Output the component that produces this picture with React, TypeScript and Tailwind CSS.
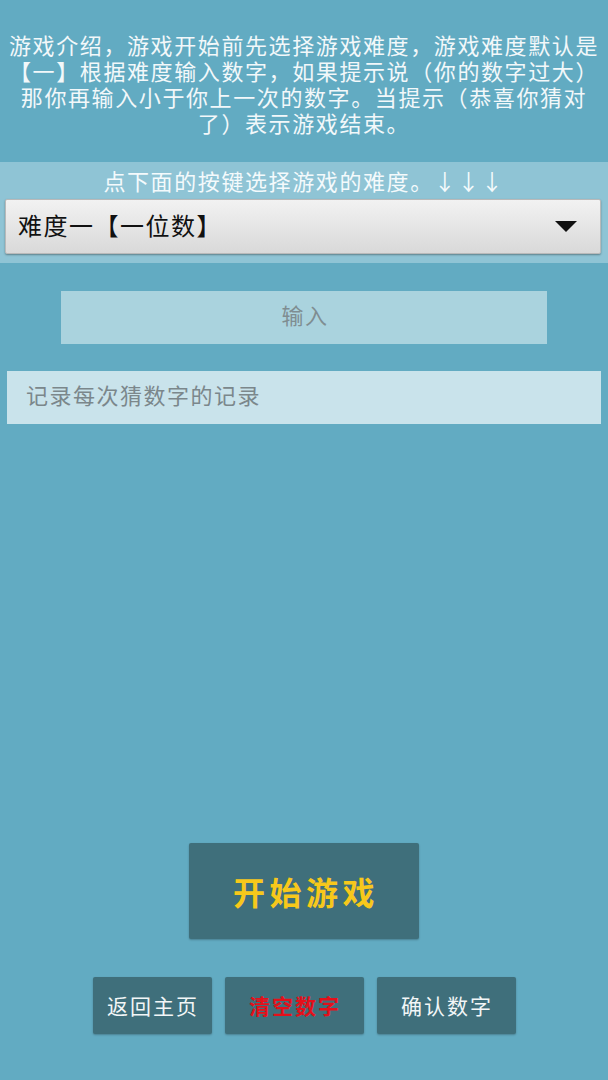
const cjk = { fontFamily: '"Noto Sans CJK SC", "Noto Sans", sans-serif' };

const introLines = [
  "游戏介绍，游戏开始前先选择游戏难度，游戏难度默认是",
  "【一】根据难度输入数字，如果提示说（你的数字过大）",
  "那你再输入小于你上一次的数字。当提示（恭喜你猜对",
  "了）表示游戏结束。",
];

function ActionButton({
  label,
  className,
  textClass,
}: {
  label: string;
  className: string;
  textClass: string;
}) {
  return (
    <button
      className={`bg-[#3f6f7b] rounded-[2px] shadow-[0_1px_2px_rgba(0,0,0,0.25)] flex items-center justify-center ${className}`}
    >
      <span className={`whitespace-nowrap ${textClass}`}>{label}</span>
    </button>
  );
}

export default function App() {
  return (
    <div
      className="w-[608px] h-[1080px] bg-[#62abc2] flex flex-col overflow-hidden"
      style={cjk}
    >
      {/* intro */}
      <div className="pt-[31px] flex flex-col items-center text-[#f2f8fa] text-[22px] tracking-[1.6px] leading-[26px]">
        {introLines.map((line) => (
          <span key={line} className="block whitespace-nowrap">
            {line}
          </span>
        ))}
      </div>

      {/* difficulty band */}
      <div className="mt-[27px] h-[101px] bg-[#8fc4d5] pt-[5px] flex flex-col">
        <div className="text-center text-[#f4fafc] text-[22px] tracking-[1.6px] leading-[26px] whitespace-nowrap">
          点下面的按键选择游戏的难度。↓↓↓
        </div>
        <div className="mt-[6px] ml-[5px] mr-[7px] h-[55px] rounded-[2px] border border-[#b9b9b9] bg-gradient-to-b from-[#f2f2f2] to-[#d9d9d9] shadow-[0_1px_2px_rgba(0,0,0,0.35)] flex items-center justify-between pl-[12px] pr-[23px]">
          <span className="text-[24px] tracking-[1.5px] text-[#111] whitespace-nowrap pb-[3px]">
            难度一【一位数】
          </span>
          <svg width="22" height="11" viewBox="0 0 22 11">
            <path d="M0 0 H22 L11 11 Z" fill="#111" />
          </svg>
        </div>
      </div>

      {/* input */}
      <div className="mt-[28px] ml-[61px] w-[486px] h-[53px] bg-[#aad3de] flex items-center justify-center">
        <span className="text-[22px] tracking-[1.5px] text-[#7f8d91] pb-[6px] pl-[2px]">输入</span>
      </div>

      {/* record */}
      <div className="mt-[27px] ml-[7px] w-[594px] h-[53px] bg-[#c9e3eb] flex items-center pl-[19px]">
        <span className="text-[22px] tracking-[1.5px] text-[#7b878b] pb-[6px]">记录每次猜数字的记录</span>
      </div>

      {/* buttons */}
      <div className="mt-auto pb-[46px] flex flex-col items-center">
        <ActionButton
          label="开始游戏"
          className="w-[230px] h-[96px]"
          textClass="text-[32px] tracking-[4.5px] pl-[4px] font-bold text-[#f7c81b]"
        />
        <div className="mt-[38px] flex gap-[13px]">
          <ActionButton
            label="返回主页"
            className="w-[119px] h-[57px]"
            textClass="text-[21px] tracking-[2px] pl-[2px] text-[#f2f6f7]"
          />
          <ActionButton
            label="清空数字"
            className="w-[139px] h-[57px]"
            textClass="text-[21px] tracking-[2px] pl-[2px] font-bold text-[#e4101a]"
          />
          <ActionButton
            label="确认数字"
            className="w-[139px] h-[57px]"
            textClass="text-[21px] tracking-[2px] pl-[2px] text-[#f2f6f7]"
          />
        </div>
      </div>
    </div>
  );
}
